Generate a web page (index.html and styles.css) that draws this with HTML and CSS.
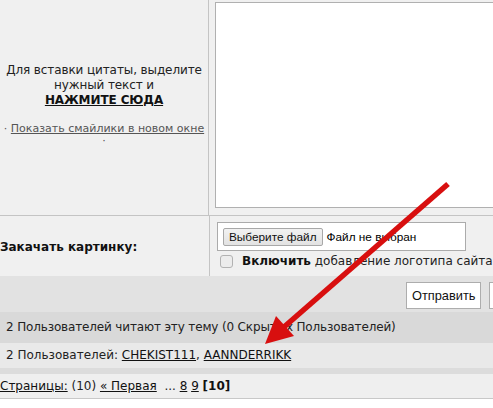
FILE: index.html
```html
<!DOCTYPE html>
<html lang="ru">
<head>
<meta charset="utf-8">
<link rel="stylesheet" href="styles.css">
</head>
<body>
<div class="page">
  <div class="row top-row">
    <div class="left-cell quote-cell">
      <p class="quote-text">Для вставки цитаты, выделите<br>нужный текст и<br><a class="strong-link" href="#">НАЖМИТЕ СЮДА</a></p>
      <p class="smiles">· <a class="grey-link" href="#">Показать смайлики в новом окне</a><br>·</p>
    </div>
    <div class="right-cell editor-cell">
      <div class="editor"></div>
    </div>
  </div>
  <div class="row upload-row">
    <div class="left-cell upload-label">Закачать картинку:</div>
    <div class="right-cell upload-cell">
      <div class="file-box"><span class="file-btn">Выберите файл</span><span class="file-name">Файл не выбран</span></div>
      <div class="logo-opt"><span class="checkbox"></span><b>Включить</b>&nbsp;добавление логотипа сайта</div>
    </div>
  </div>
  <div class="submit-bar">
    <span class="btn">Отправить</span><span class="btn btn-cut"></span>
  </div>
  <div class="readers">2 Пользователей читают эту тему (0 Скрытых Пользователей)</div>
  <div class="users">2 Пользователей: <a href="#">CHEKIST111</a>, <a href="#">AANNDERRIKK</a></div>
  <div class="spacer"></div>
  <div class="pages"><a href="#">Страницы:</a> (10) <a href="#">« Первая</a> &nbsp;... <a href="#">8</a> <a href="#">9</a> <b>[10]</b></div>
</div>
<svg class="arrow" width="493" height="408" viewBox="0 0 493 408">
  <line x1="448" y1="184" x2="284" y2="327" stroke="#d80f0f" stroke-width="5.5" stroke-linecap="butt"/>
  <polygon points="265,344 276,316 294,336" fill="#d80f0f"/>
</svg>
</body>
</html>
```
FILE: styles.css
```css
html, body {
  margin: 0;
  padding: 0;
  background: #ffffff;
  overflow: hidden;
  width: 493px;
  height: 408px;
}
body {
  position: relative;
  font-family: "DejaVu Sans", Verdana, sans-serif;
  font-size: 12px;
  color: #222;
}
.page {
  width: 493px;
}
.row {
  display: flex;
  background: #f0f0f0;
}
.left-cell {
  width: 209px;
  flex: none;
  border-right: 1px solid #c4c4c4;
  box-sizing: content-box;
}
.right-cell {
  flex: 1;
  min-width: 0;
}
.top-row {
  height: 215px;
  border-bottom: 1px solid #c4c4c4;
}
.quote-cell {
  display: flex;
  flex-direction: column;
  justify-content: center;
  align-items: center;
  text-align: center;
  padding-bottom: 6px;
  box-sizing: border-box;
}
.quote-text {
  margin: 0;
  line-height: 15px;
  letter-spacing: -0.1px;
}
.strong-link {
  color: #111;
  font-weight: bold;
}
.smiles {
  margin: 15px 0 0 0;
  font-size: 11px;
  line-height: 12px;
  color: #555;
}
.grey-link {
  color: #555;
}
.editor-cell {
  padding: 2px 0 0 6px;
  overflow: hidden;
}
.editor {
  width: 300px;
  height: 204px;
  border: 1px solid #b0b0b0;
  background: #fff;
}
.upload-row {
  height: 60px;
}
.upload-label {
  display: flex;
  align-items: center;
  font-weight: bold;
  color: #111;
  padding-top: 2px;
}
.upload-cell {
  padding: 6px 0 0 7px;
}
.file-box {
  width: 242px;
  height: 27px;
  border: 1px solid #ababab;
  background: #fff;
  display: flex;
  align-items: center;
  padding-left: 5px;
  box-sizing: content-box;
  font-family: "Liberation Sans", Arial, sans-serif;
  font-size: 11.8px;
  color: #000;
}
.file-btn {
  height: 16px;
  line-height: 16px;
  padding: 0 5px;
  border: 1px solid #a8a8a8;
  border-radius: 2px;
  background: linear-gradient(#f2f2f2, #e2e2e2);
  margin-right: 4px;
  color: #111;
}
.logo-opt {
  display: flex;
  align-items: center;
  margin-top: 3px;
  padding-left: 3px;
  color: #222;
  white-space: nowrap;
}
.logo-opt b {
  color: #111;
}
.checkbox {
  width: 11px;
  height: 11px;
  border: 1px solid #b2b2b2;
  border-radius: 3px;
  background: #ececec;
  margin-right: 9px;
}
.submit-bar {
  height: 36px;
  background: #e2e2e2;
  display: flex;
  align-items: flex-start;
  padding: 6px 0 0 406px;
  box-sizing: border-box;
  gap: 8px;
  overflow: hidden;
  white-space: nowrap;
}
.btn {
  flex: none;
  height: 25px;
  line-height: 25px;
  padding: 0 5px;
  border: 1px solid #adadad;
  background: #fff;
  font-family: "Liberation Sans", Arial, sans-serif;
  font-size: 12.8px;
  color: #111;
}
.btn-cut {
  width: 40px;
  padding: 0;
}
.readers {
  height: 31px;
  line-height: 31px;
  background: #d9d9d9;
  padding-left: 6px;
  color: #222;
  white-space: nowrap;
  letter-spacing: -0.15px;
}
.users {
  height: 25px;
  line-height: 25px;
  background: #e9e9e9;
  padding-left: 6px;
  color: #222;
  white-space: nowrap;
}
.users a, .pages a {
  color: #111;
}
.spacer {
  height: 6px;
  background: #dcdcdc;
}
.pages {
  height: 24px;
  line-height: 24px;
  background: #efefef;
  border-bottom: 1px solid #c8c8c8;
  white-space: nowrap;
  color: #222;
}
.pages b {
  color: #111;
}
.arrow {
  position: absolute;
  left: 0;
  top: 0;
  pointer-events: none;
}
```
